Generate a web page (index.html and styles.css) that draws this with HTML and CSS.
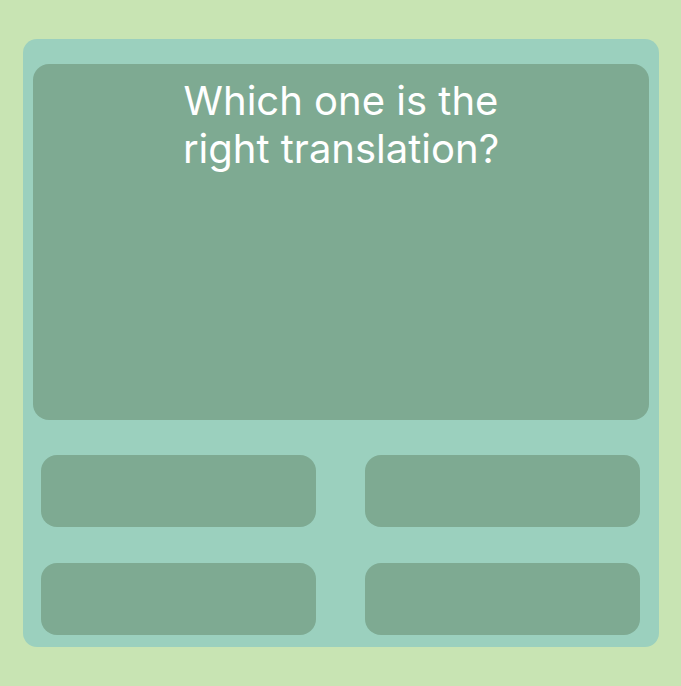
FILE: index.html
```html
<!DOCTYPE html>
<html>
<head>
<meta charset="utf-8">
<link rel="stylesheet" href="styles.css">
</head>
<body>
<div class="card">
  <div class="prompt">
    <h1 class="question">Which one is the<br>right translation?</h1>
  </div>
  <div class="options">
    <button class="option"></button>
    <button class="option"></button>
    <button class="option"></button>
    <button class="option"></button>
  </div>
</div>
</body>
</html>
```

FILE: styles.css
```css
html, body {
  margin: 0;
  padding: 0;
}
body {
  background: #c8e4b3;
  width: 681px;
  height: 686px;
  font-family: Inter, "Noto Sans", sans-serif;
}
.card {
  box-sizing: border-box;
  margin: 39px 0 0 23px;
  width: 636px;
  height: 608px;
  background: #9bd0be;
  border-radius: 14px;
  padding: 25px 10px 12px 10px;
  display: flex;
  flex-direction: column;
}
.prompt {
  height: 356px;
  background: #7eaa92;
  border-radius: 16px;
  display: flex;
  justify-content: center;
  padding-top: 13px;
  box-sizing: border-box;
}
.question {
  margin: 0;
  color: #ffffff;
  font-size: 40px;
  line-height: 48px;
  font-weight: 400;
  text-align: center;
}
.options {
  display: grid;
  grid-template-columns: 275px 275px;
  grid-auto-rows: 72px;
  column-gap: 49px;
  row-gap: 36px;
  padding: 35px 9px 0 8px;
}
.option {
  border: none;
  margin: 0;
  padding: 0;
  background: #7eaa92;
  border-radius: 16px;
}
```
